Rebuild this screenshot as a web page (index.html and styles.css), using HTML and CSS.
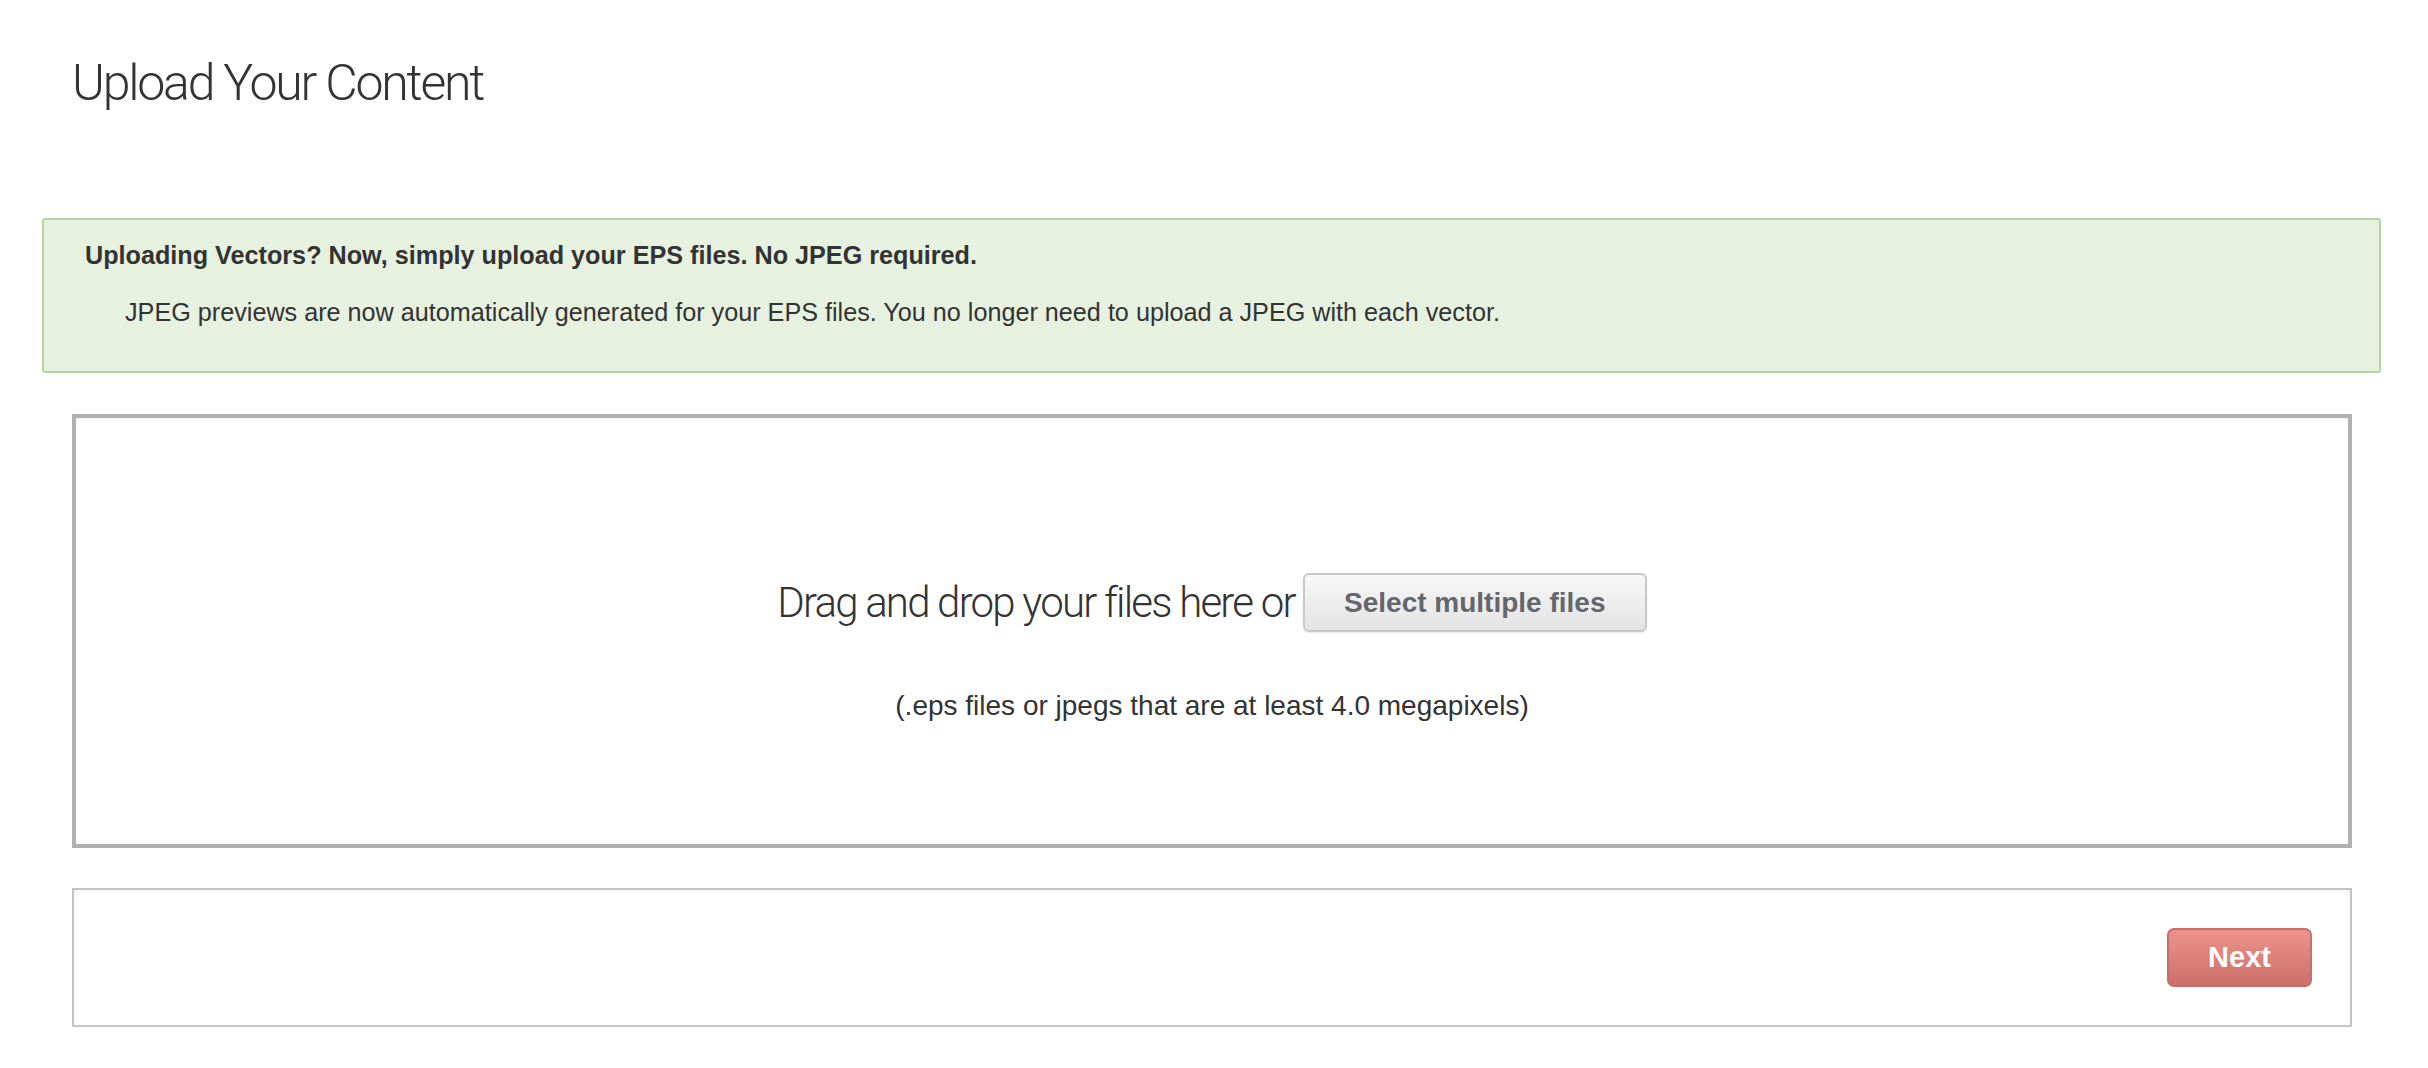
FILE: index.html
```html
<!DOCTYPE html>
<html lang="en">
<head>
  <meta charset="UTF-8" />
  <title>Upload Your Content</title>
  <link rel="stylesheet" href="styles.css">
</head>
<body>

  <div class="page">
    <h1 class="page-title">Upload Your Content</h1>

    <!-- info banner -->
    <div class="notice">
      <p class="notice-title">Uploading Vectors? Now, simply upload your EPS files. No JPEG required.</p>
      <p class="notice-text">JPEG previews are now automatically generated for your EPS files. You no longer need to upload a JPEG with each vector.</p>
    </div>

    <div class="dropzone">
      <div class="drop-row">
        <span class="drop-label">Drag and drop your files here or</span>
        <button class="select-btn">Select multiple files</button>
      </div>
      <p class="drop-hint">(.eps files or jpegs that are at least 4.0 megapixels)</p>
    </div>

    <div class="actions">
      <button class="next-btn">Next</button>
    </div>
  </div>

</body>
</html>
```

FILE: styles.css
```css
* {
  margin: 0;
  padding: 0;
  box-sizing: border-box;
}

body {
  background: #fff;
  color: #333;
  font-family: 'Liberation Sans', Arial, sans-serif;
}

.page {
  padding: 0 47px 0 42px;
}

.page-title {
  font-family: Roboto, 'Open Sans', sans-serif;
  font-weight: 300;
  font-size: 50px;
  letter-spacing: -2.2px;
  line-height: 60px;
  color: #333;
  margin: 0 29px 0 30px;
  padding-top: 53px;
  height: 218px;
}

/* green banner */
.notice {
  background: #e6f1df;
  border: 2px solid #b3d69f;
  border-radius: 3px;
  height: 155px;
  padding: 20px 40px 0 41px;
}

.notice-title {
  font-weight: bold;
  font-size: 25.2px;
  line-height: 30px;
}

.notice-text {
  font-size: 25.2px;
  line-height: 30px;
  margin-top: 27px;
  padding-left: 40px;
}

.dropzone {
  margin: 41px 29px 0 30px;
  height: 434px;
  border: 4px solid #b1b1b1;
  box-shadow: inset 0 2px 3px rgba(0, 0, 0, 0.06);
  padding-top: 155px;
  text-align: center;
}

.drop-row {
  display: flex;
  justify-content: center;
  align-items: center;
  gap: 8px;
  height: 59px;
}

.drop-label {
  font-family: Roboto, 'Open Sans', sans-serif;
  font-weight: 300;
  font-size: 42px;
  letter-spacing: -1.8px;
  color: #333;
}

.select-btn {
  height: 59px;
  width: 344px;
  background: linear-gradient(#f7f7f7, #e3e3e3);
  border: 2px solid #c8c8c8;
  border-radius: 6px;
  box-shadow: 0 1px 2px rgba(0, 0, 0, 0.1);
  font-family: 'Liberation Sans', Arial, sans-serif;
  font-weight: bold;
  font-size: 28px;
  color: #64666b;
}

.drop-hint {
  font-size: 28px;
  line-height: 30px;
  margin-top: 59px;
  color: #333;
}

/* bottom bar */
.actions {
  margin: 40px 29px 0 30px;
  height: 139px;
  border: 2px solid #c4c4c4;
  box-shadow: inset 0 2px 3px rgba(0, 0, 0, 0.04);
  display: flex;
  justify-content: flex-end;
  align-items: center;
  padding-right: 38px;
}

.next-btn {
  width: 145px;
  height: 59px;
  background: linear-gradient(#ec948c, #cb6e69);
  border: 2px solid #c96d67;
  border-radius: 7px;
  color: #fff;
  font-family: 'Liberation Sans', Arial, sans-serif;
  font-weight: bold;
  font-size: 29px;
}
```
